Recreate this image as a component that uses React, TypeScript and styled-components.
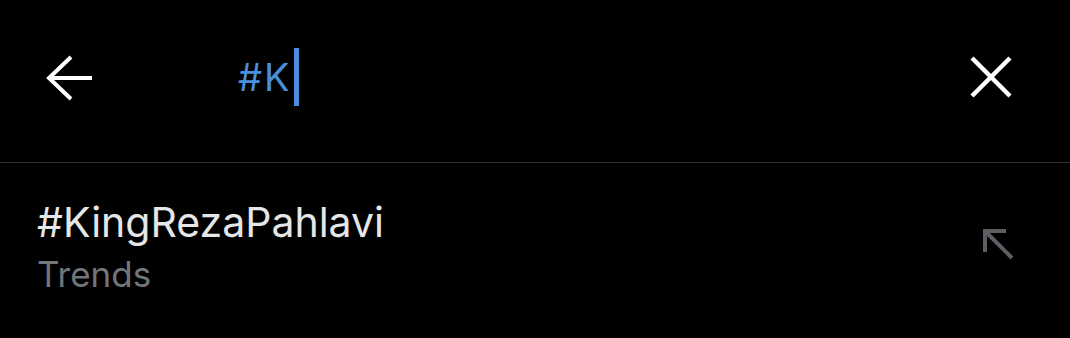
import React from 'react';
import styled, { createGlobalStyle } from 'styled-components';

const GlobalStyle = createGlobalStyle`
  html, body {
    margin: 0;
    padding: 0;
    background: #000;
  }
  body {
    font-family: Inter, "Noto Sans", sans-serif;
  }
`;

// --- Styled Components ---

const Page = styled.div`
  width: 1070px;
  height: 338px;
  background: #000;
  overflow: hidden;
`;

const SearchBar = styled.div`
  height: 163px;
  display: flex;
  align-items: center;
  padding: 0 54px 8px 40px;
  box-sizing: border-box;
  border-bottom: 1px solid #2f3336;
`;

const IconButton = styled.button<{ $w: number }>`
  width: ${p => p.$w}px;
  height: 50px;
  padding: 0;
  border: none;
  background: transparent;
  display: flex;
  align-items: center;
  justify-content: center;
  cursor: pointer;
`;

const QueryField = styled.div`
  flex: 1;
  display: flex;
  align-items: center;
  padding-left: 142px;
`;

const Query = styled.span`
  font-size: 38px;
  color: #4a8fdc;
  letter-spacing: 2px;
`;

const Caret = styled.span`
  display: inline-block;
  width: 5px;
  height: 58px;
  margin-left: 2px;
  background: #4a8fdc;
`;

const SuggestionRow = styled.div`
  display: flex;
  align-items: flex-start;
  justify-content: space-between;
  padding: 35px 50px 0 37px;
`;

const SuggestionText = styled.div`
  display: flex;
  flex-direction: column;
  gap: 7px;
`;

const SuggestionTitle = styled.div`
  font-size: 41px;
  line-height: 48px;
  color: #e4e6e7;
`;

const SuggestionMeta = styled.div`
  font-size: 35px;
  line-height: 42px;
  color: #71767b;
`;

const FillIcon = styled.div`
  width: 40px;
  height: 40px;
  margin-top: 28px;
`;

// --- Component ---

export default function App() {
  return (
    <Page>
      <GlobalStyle />
      <SearchBar>
        <IconButton $w={56} aria-label="Back">
          <svg width="56" height="50" viewBox="0 0 56 50" fill="none">
            <path
              d="M52 26H9 M31 5L9 26L31 47"
              stroke="#fff"
              strokeWidth="4"
            />
          </svg>
        </IconButton>
        <QueryField>
          <Query>#K</Query>
          <Caret />
        </QueryField>
        <IconButton $w={50} aria-label="Clear">
          <svg width="50" height="50" viewBox="0 0 50 50" fill="none">
            <path d="M6 6L44 44 M44 6L6 44" stroke="#fff" strokeWidth="4.5" />
          </svg>
        </IconButton>
      </SearchBar>
      <SuggestionRow>
        <SuggestionText>
          <SuggestionTitle>#KingRezaPahlavi</SuggestionTitle>
          <SuggestionMeta>Trends</SuggestionMeta>
        </SuggestionText>
        <FillIcon>
          <svg width="40" height="40" viewBox="0 0 40 40" fill="none">
            <path d="M26 5H5V26 M5 5L32 32" stroke="#5b5f63" strokeWidth="4" />
          </svg>
        </FillIcon>
      </SuggestionRow>
    </Page>
  );
}
